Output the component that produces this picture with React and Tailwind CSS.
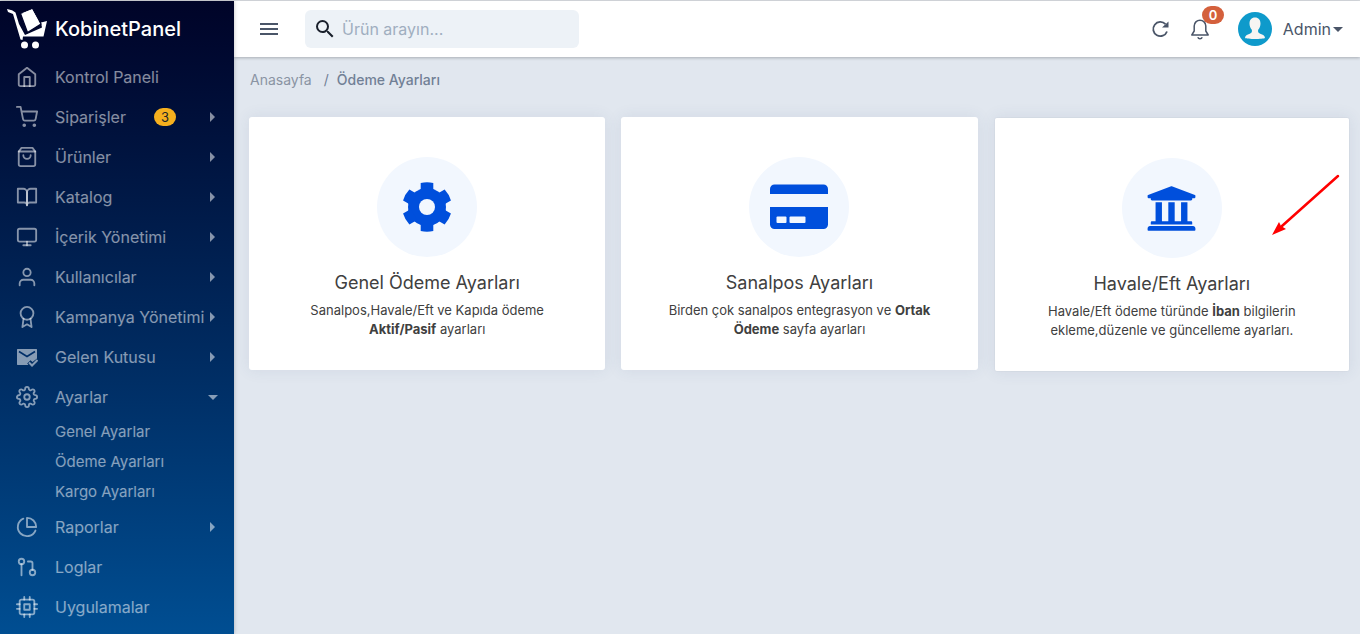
import React from "react";
import {
  FiHome,
  FiShoppingCart,
  FiShoppingBag,
  FiBookOpen,
  FiMonitor,
  FiUser,
  FiAward,
  FiSettings,
  FiPieChart,
  FiGitPullRequest,
  FiCpu,
} from "react-icons/fi";
import { MdSearch } from "react-icons/md";
import { FaUniversity } from "react-icons/fa";

// Envelope with a check mark, same 22px box as the feather icons
const MailCheck = ({ className }) => (
  <svg viewBox="0 0 22 22" className={className} fill="none">
    <path d="M1.500 3h19l.5.500V12.500l-4.500 3.500-2-1.700-3.300 3.200 1.300 1.500H1.500L1 18.500v-15z" fill="currentColor" />
    <path d="M3 5.500l8 5 8-5" stroke="#002e68" strokeWidth="1.600" />
    <path d="M13 16.500l3 3 5.500-5.500" stroke="currentColor" strokeWidth="2" />
  </svg>
);

const menu = [
  { label: "Kontrol Paneli", icon: FiHome },
  { label: "Siparişler", icon: FiShoppingCart, badge: 3, arrow: true },
  { label: "Ürünler", icon: FiShoppingBag, arrow: true },
  { label: "Katalog", icon: FiBookOpen, arrow: true },
  { label: "İçerik Yönetimi", icon: FiMonitor, arrow: true },
  { label: "Kullanıcılar", icon: FiUser, arrow: true },
  { label: "Kampanya Yönetimi", icon: FiAward, arrow: true },
  { label: "Gelen Kutusu", icon: MailCheck, arrow: true },
  {
    label: "Ayarlar",
    icon: FiSettings,
    children: ["Genel Ayarlar", "Ödeme Ayarları", "Kargo Ayarları"],
  },
  { label: "Raporlar", icon: FiPieChart, arrow: true },
  { label: "Loglar", icon: FiGitPullRequest },
  { label: "Uygulamalar", icon: FiCpu },
];

const Logo = () => (
  <svg viewBox="0 0 40 42" className="w-10 h-[42px] shrink-0" fill="#fff">
    <path d="M0 1l5 1.200 3.500 2.300L12 16l6 11 17-7.500L34 14.500l6-1.500-3.500 15.500H16L15.500 32l-2-.5L6 6 1 4z" />
    <path d="M13.500 5.500L25.500.5 34 16 20.500 24.500z" stroke="#00052b" strokeWidth="1.200" />
    <path d="M15.500 5L25 1.200 31.500 13z" />
    <circle cx="17.500" cy="37" r="3.500" />
    <circle cx="28.500" cy="37" r="3.500" />
  </svg>
);

const CaretRight = () => (
  <svg viewBox="0 0 5 10" className="w-[5px] h-2.5 shrink-0" fill="currentColor">
    <path d="M0 0l5 5-5 5z" />
  </svg>
);

const CaretDown = () => (
  <svg viewBox="0 0 10 5" className="w-2.5 h-[5px] shrink-0" fill="currentColor">
    <path d="M0 0h10L5 5z" />
  </svg>
);

const MenuItem = ({ item }) => {
  const Icon = item.icon;
  return (
    <li>
      <a href="#" className="flex items-center h-10 pl-4 pr-[19px]">
        <Icon className="w-[22px] h-[22px] shrink-0 mr-[17px]" />
        <span className="whitespace-nowrap">{item.label}</span>
        {item.badge && (
          <span className="ml-7 h-[18px] px-[7px] rounded-full bg-[#f6b01e] text-[#212529] text-[13px] leading-[18px]">
            {item.badge}
          </span>
        )}
        <span className="ml-auto">
          {item.arrow && <CaretRight />}
          {item.children && (
            <span className="block -mr-[3px]">
              <CaretDown />
            </span>
          )}
        </span>
      </a>
      {item.children && (
        <ul>
          {item.children.map((child) => (
            <li key={child}>
              <a href="#" className="flex items-center h-[30px] pl-[55px] text-[15px]">
                {child}
              </a>
            </li>
          ))}
        </ul>
      )}
    </li>
  );
};

const Sidebar = () => (
  <aside className="relative z-10 w-[234px] shrink-0 bg-linear-to-b from-[#000428] to-[#004e92] shadow-[0_0_4px_rgba(0,0,0,0.25)]">
    <a href="#" className="flex items-center h-14 pl-[7px] gap-2 text-xl font-medium text-white">
      <Logo />
      KobinetPanel
    </a>
    <nav className="text-base text-white/53">
      <ul>
        {menu.map((item) => (
          <MenuItem key={item.label} item={item} />
        ))}
      </ul>
    </nav>
  </aside>
);

const Header = () => (
  <header className="flex items-center h-14 pl-[25px] pr-[17px] bg-white text-[#4a5568] shadow-[0_1px_3px_rgba(0,0,0,0.25)]">
    <button type="button" aria-label="Menü" className="w-5 h-5">
      <svg viewBox="0 0 20 20" className="w-5 h-5" fill="currentColor">
        <path d="M1 4h18v2H1zM1 9h18v2H1zM1 14h18v2H1z" />
      </svg>
    </button>
    <label className="flex items-center w-[274px] h-[38px] ml-[26px] pl-2 rounded-md bg-[#edf2f7]">
      <MdSearch className="w-6 h-6 shrink-0 text-[#1a202c]" />
      <input
        type="text"
        aria-label="Ürün arayın"
        placeholder="Ürün arayın..."
        className="w-full ml-[5px] text-base outline-none placeholder:text-[#a0aec0]"
      />
    </label>
    <div className="flex items-center ml-auto">
      <button type="button" aria-label="Yenile">
        <svg viewBox="0 0 20 20" className="w-5 h-5" fill="none" stroke="currentColor" strokeWidth="1.800">
          <path d="M15.500 5.200A7.100 7.100 0 1 0 17 12.500" />
          <path d="M18.500 2.500v6h-6.500z" fill="currentColor" stroke="none" />
        </svg>
      </button>
      <button type="button" aria-label="Bildirimler" className="relative ml-5">
        <svg viewBox="0 0 20 22" className="w-5 h-[22px]" fill="none" stroke="currentColor" strokeWidth="1.500">
          <path d="M1.800 17h16.400L15.800 13V8a5.800 5.800 0 0 0-11.600 0v5z" strokeLinejoin="round" />
          <path d="M7.800 19.300a2.300 2 0 0 0 4.400 0" />
        </svg>
        <span className="absolute -top-3 left-3 h-[18px] px-[7px] rounded-full bg-[#d4603c] text-white text-[13px] font-semibold leading-[18px]">
          0
        </span>
      </button>
      <button type="button" className="flex items-center ml-7 text-base">
        <svg viewBox="0 0 34 34" className="w-[34px] h-[34px] mr-[11px]">
          <circle cx="17" cy="17" r="17" fill="#0e9acb" />
          <path
            d="M17 5.500c3.600 0 5.500 2.500 5.500 6 0 2.600-.9 4.800-2.300 6.300-.5 2 .1 3.200 2 4 2.600 1 4.800 1.700 4.800 4.200-2 1.300-18 1.300-20 0 0-2.500 2.200-3.200 4.800-4.200 1.900-.8 2.500-2 2-4-1.400-1.500-2.300-3.700-2.300-6.300 0-3.500 1.900-6 5.500-6z"
            fill="#f7f5f3"
          />
        </svg>
        Admin
        <span className="ml-0.5">
          <CaretDown />
        </span>
      </button>
    </div>
  </header>
);

const CogIcon = () => (
  <svg viewBox="-25 -25 50 50" className="w-[50px] h-[50px]">
    <g fill="#004fdc">
      <circle r="19" />
      {[0, 60, 120, 180, 240, 300].map((deg) => (
        <path key={deg} transform={`rotate(${deg})`} d="M-8 -15L-6.300 -18V-24Q0 -25.500 6.300 -24V-18L8 -15z" />
      ))}
    </g>
    <circle r="8" fill="#f2f7fe" />
  </svg>
);

const CardIcon = () => (
  <svg viewBox="0 0 58 46" className="w-[58px] h-[46px]">
    <path d="M0 10V5a4.500 4.500 0 0 1 4.500-4.500h49A4.500 4.500 0 0 1 58 5v5zM0 23h58v17.500a4.500 4.500 0 0 1-4.500 4.500h-49A4.500 4.500 0 0 1 0 40.500z" fill="#004fdc" />
    <rect x="6.500" y="32.500" width="10" height="6.500" rx="1" fill="#f2f7fe" />
    <rect x="19.500" y="32.500" width="16" height="6.500" rx="1" fill="#f2f7fe" />
  </svg>
);

const SettingCard = ({ icon, title, children, active }) => (
  <a
    href="#"
    className={
      "relative flex flex-col items-center px-11 pt-10 pb-[31px] rounded-[3px] bg-white bg-clip-padding text-center text-[#404040] shadow-[0_0_16px_rgba(60,80,120,0.09)]" +
      (active ? " border border-black/2" : "")
    }
  >
    <div className="flex items-center justify-center w-[100px] h-[100px] rounded-full bg-[#f2f7fe]">{icon}</div>
    <h2 className="mt-3 text-lg leading-7">{title}</h2>
    <p className="mt-1 text-[13px] leading-[19px]">{children}</p>
    {active && (
      <svg viewBox="0 0 68 62" className="absolute top-14 right-[9px] w-[68px] h-[62px]">
        <path d="M66 2L10 52" stroke="#f00" strokeWidth="2.500" strokeLinecap="round" />
        <path d="M0 61L7 48l2 4 5 3z" fill="#f00" />
      </svg>
    )}
  </a>
);

const App = () => {
  return (
    <div className="flex min-h-screen border-t border-[#d8dbe0] bg-[#e1e7ef] font-['Inter',sans-serif]">
      <Sidebar />
      <div className="flex-1 min-w-0">
        <Header />
        <main className="pl-[15px] pr-2.5">
          <nav className="flex items-center h-[46px] pl-px text-sm text-[#8a94a3]">
            <a href="#">Anasayfa</a>
            <span className="mx-2 pl-1 text-[#718096]">/</span>
            <span className="font-medium text-[#718096]">Ödeme Ayarları</span>
          </nav>
          <div className="grid grid-cols-3 items-start gap-4 mt-3.5">
            <SettingCard icon={<CogIcon />} title="Genel Ödeme Ayarları">
              Sanalpos,Havale/Eft ve Kapıda ödeme <b>Aktif/Pasif</b> ayarları
            </SettingCard>
            <SettingCard icon={<CardIcon />} title="Sanalpos Ayarları">
              Birden çok sanalpos entegrasyon ve <b>Ortak Ödeme</b> sayfa ayarları
            </SettingCard>
            <SettingCard icon={<FaUniversity className="w-[51px] h-[51px] text-[#004fdc]" />} title="Havale/Eft Ayarları" active>
              Havale/Eft ödeme türünde <b>İban</b> bilgilerin ekleme,düzenle ve güncelleme ayarları.
            </SettingCard>
          </div>
        </main>
      </div>
    </div>
  );
};

export default App;
